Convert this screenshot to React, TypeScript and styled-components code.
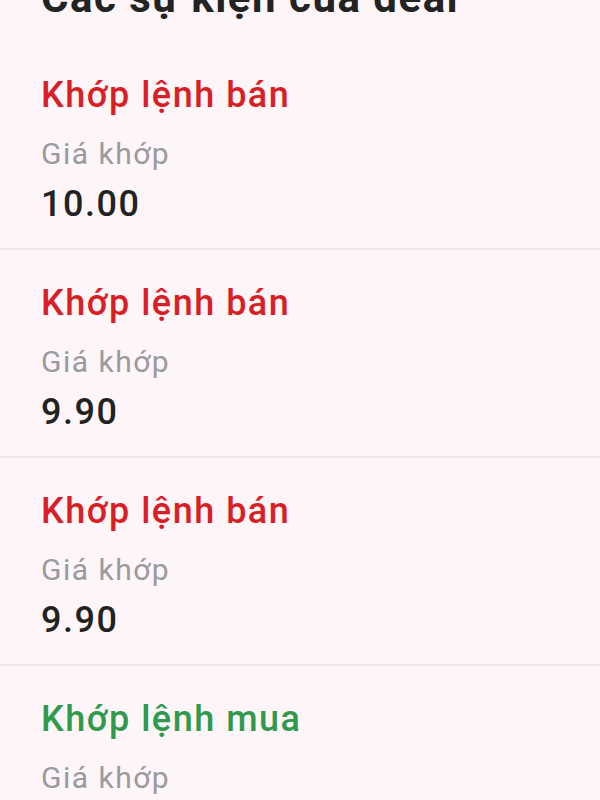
import React from "react";
import styled, { createGlobalStyle } from "styled-components";

const Global = createGlobalStyle`
  html, body { margin: 0; padding: 0; background: #fdf5f8; }
  body { font-family: Roboto, "Noto Sans", sans-serif; overflow: hidden; }
`;

const Page = styled.div`
  width: 600px;
  height: 800px;
  overflow: hidden;
  background: #fdf5f8;
`;

const Scroll = styled.div`
  margin-top: -24px;
`;

const Heading = styled.h1`
  margin: 0;
  padding: 0 41px 22px;
  font-size: 42px;
  line-height: 44px;
  font-weight: 700;
  letter-spacing: 1.5px;
  color: #232323;
`;

const Card = styled.div`
  padding: 33px 41px 22px;
  border-bottom: 2px solid #ebe6e9;
  display: flex;
  flex-direction: column;
`;

const EventTitle = styled.div<{ $side: "buy" | "sell" }>`
  font-size: 36px;
  line-height: 40px;
  font-weight: 500;
  letter-spacing: 1.5px;
  color: ${(p) => (p.$side === "sell" ? "#d81f26" : "#2f9a4c")};
  margin-bottom: 21px;
`;

const Label = styled.div`
  font-size: 30px;
  line-height: 36px;
  letter-spacing: 1.5px;
  color: #9b9a9e;
  margin-bottom: 10px;
`;

const Value = styled.div`
  font-size: 36px;
  line-height: 44px;
  font-weight: 500;
  letter-spacing: 1.5px;
  color: #222222;
`;

const events: { side: "buy" | "sell"; price: string }[] = [
  { side: "sell", price: "10.00" },
  { side: "sell", price: "9.90" },
  { side: "sell", price: "9.90" },
  { side: "buy", price: "9.80" },
];

export default function App() {
  return (
    <Page>
      <Global />
      <Scroll>
        <Heading>Các sự kiện của deal</Heading>
        {events.map((e, i) => (
          <Card key={i}>
            <EventTitle $side={e.side}>
              {e.side === "sell" ? "Khớp lệnh bán" : "Khớp lệnh mua"}
            </EventTitle>
            <Label>Giá khớp</Label>
            <Value>{e.price}</Value>
          </Card>
        ))}
      </Scroll>
    </Page>
  );
}
